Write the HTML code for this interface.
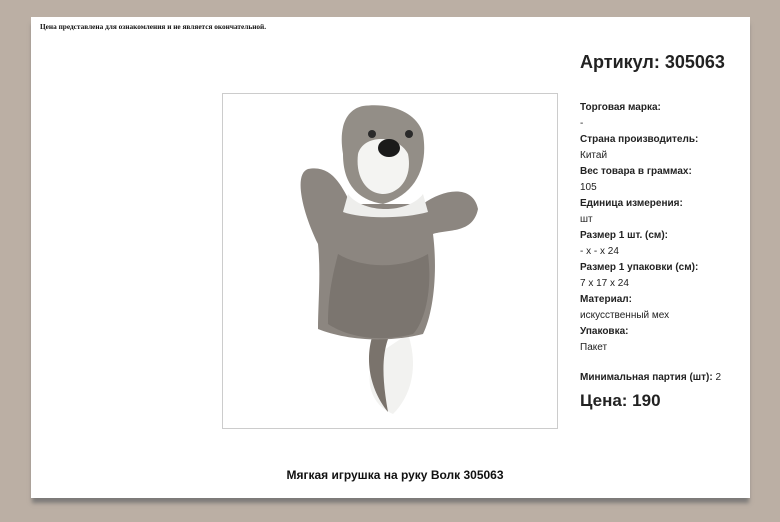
<!DOCTYPE html>
<html><head><meta charset="utf-8"><style>
*{margin:0;padding:0}
body{width:780px;height:522px;background:#bbafa4;position:relative;overflow:hidden;font-family:"Liberation Sans",Arial,sans-serif;color:#111}
.page{position:absolute;left:31px;top:17px;width:719px;height:481px;background:#fff;box-shadow:0 6px 4px -1px #7d7b79}
.note{position:absolute;left:40px;top:22px;font-family:"Liberation Serif",serif;font-size:7.3px;font-weight:bold}
.box{position:absolute;left:222px;top:93px;width:334px;height:334px;border:1px solid #ccc;background:#fff}
h1{position:absolute;left:580px;top:52px;font-size:18px;font-weight:bold;color:#222}
.info{position:absolute;left:580px;top:100px;font-size:10px;line-height:16px;color:#222}
.info b{display:block}
.min{position:absolute;left:580px;top:372px;font-size:10px;color:#222}
.price{position:absolute;left:580px;top:391px;font-size:17px;font-weight:bold;color:#222}
.cap{position:absolute;left:0;width:790px;top:468px;text-align:center;font-size:12px;font-weight:bold;color:#111}
</style></head><body>
<div class="page"></div>
<div class="note">Цена представлена для ознакомления и не является окончательной.</div>
<div class="box">
<svg width="334" height="334" viewBox="0 0 334 334">
<path d="M155 260 C140 280 145 310 170 320 C190 300 195 270 185 240 Z" fill="#f2f2f0"/>
<path d="M150 240 C140 270 150 300 165 318 C160 290 158 265 165 245 Z" fill="#7a736c"/>
<path d="M95 150 C80 120 70 80 85 75 C110 70 120 95 128 110 L200 110 C220 95 250 90 255 115 C250 140 225 135 210 140 C215 180 210 220 200 240 C160 250 120 245 95 235 C95 210 98 180 95 150 Z" fill="#8c8680"/>
<path d="M120 60 C115 30 125 15 140 12 C170 8 195 20 200 40 C205 70 195 100 160 110 C130 105 120 85 120 60 Z" fill="#938e87"/>
<path d="M135 60 C140 40 175 40 185 60 C190 85 175 100 160 100 C145 100 132 85 135 60 Z" fill="#f4f4f2"/>
<path d="M125 100 C140 120 185 120 200 100 L205 118 C180 125 140 125 120 118Z" fill="#eeeeec"/>
<ellipse cx="166" cy="54" rx="11" ry="9" fill="#1a1a1a"/>
<circle cx="149" cy="40" r="4" fill="#2a2a2a"/><circle cx="186" cy="40" r="4" fill="#2a2a2a"/>
<path d="M115 160 C140 175 180 175 205 160 C210 200 200 230 190 240 C150 250 120 240 105 230 C105 200 110 180 115 160Z" fill="#6a645e" opacity=".5"/>
</svg>
</div>
<h1>Артикул: 305063</h1>
<div class="info">
<b>Торговая марка:</b>-
<b>Страна производитель:</b>Китай
<b>Вес товара в граммах:</b>105
<b>Единица измерения:</b>шт
<b>Размер 1 шт. (см):</b>- x - x 24
<b>Размер 1 упаковки (см):</b>7 x 17 x 24
<b>Материал:</b>искусственный мех
<b>Упаковка:</b>Пакет
</div>
<div class="min"><b>Минимальная партия (шт):</b> 2</div>
<div class="price">Цена: 190</div>
<div class="cap">Мягкая игрушка на руку Волк 305063</div>
</body></html>
